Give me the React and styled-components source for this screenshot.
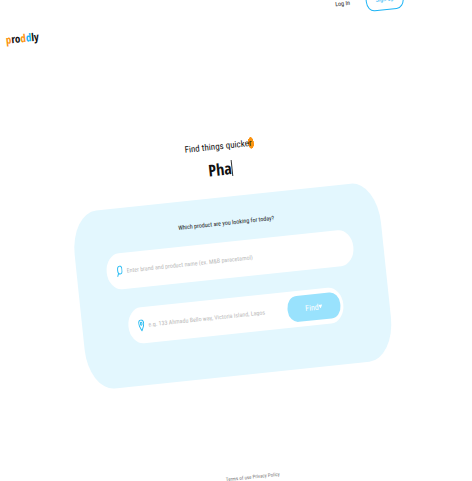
import React from 'react';
import styled, { createGlobalStyle } from 'styled-components';

const GlobalStyle = createGlobalStyle`
  *, *::before, *::after { box-sizing: border-box; }
  body {
    margin: 0;
    background: #fff;
    color: #111;
    font-family: "Roboto Condensed", Roboto, sans-serif;
  }
  a { color: inherit; text-decoration: none; }
  button, input { font: inherit; }
`;

const Shell = styled.div`
  height: 100vh;
  overflow: hidden;
`;

const Page = styled.div`
  display: flex;
  flex-direction: column;
  align-items: center;
  padding: 5px 44px 0 28px;
  transform: rotate(-6deg);
  transform-origin: 50% 240px;
`;

const Header = styled.header`
  display: flex;
  align-self: stretch;
  justify-content: space-between;
  align-items: flex-start;
  height: 132px;
`;

const Logo = styled.a`
  padding-top: 4px;
  font: 700 11px/16px "Open Sans Condensed", "Open Sans", sans-serif;
`;

const LogoLetter = styled.span`
  color: ${(p) => p.$color};
`;

const Nav = styled.nav`
  display: flex;
  align-items: center;
  gap: 16px;
  font-size: 6px;
  line-height: 8px;
`;

const SignUp = styled.a`
  display: flex;
  align-items: center;
  justify-content: center;
  width: 38px;
  height: 22px;
  border: 1px solid #1db4f5;
  border-radius: 8px / 10px;
  color: #1db4f5;
`;

const Hero = styled.section`
  display: flex;
  flex-direction: column;
  align-items: center;
`;

const Tagline = styled.p`
  margin: 0;
  font-size: 9px;
  line-height: 16px;
`;

const Accent = styled.span`
  display: inline-block;
  height: 12px;
  margin-right: -2px;
  padding-right: 2px;
  line-height: 12px;
  background: radial-gradient(ellipse 3px 6px at calc(100% - 3px) 50%, #fb9310 92%, transparent);
`;

const Typed = styled.h1`
  display: flex;
  align-items: center;
  margin: 5px 0 18px;
  font: 700 16px/20px "Open Sans Condensed", "Open Sans", sans-serif;
`;

const Caret = styled.span`
  width: 1px;
  height: 16px;
  background: #333;
`;

const Panel = styled.form`
  display: flex;
  flex-direction: column;
  align-items: center;
  width: 100%;
  max-width: 308px;
  height: 179px;
  padding-top: 21px;
  border-radius: 26px / 42px;
  background: #e3f7fe;
`;

const PanelTitle = styled.h2`
  margin: 0 0 14px;
  font-size: 6px;
  line-height: 10px;
  font-weight: 400;
`;

const Field = styled.label`
  display: flex;
  align-items: center;
  gap: 4px;
  width: ${(p) => p.$width};
  height: 36px;
  margin-bottom: 20px;
  padding: 0 3px 0 10px;
  border-radius: 14px / 18px;
  background: #fff;
`;

const TextInput = styled.input`
  flex: 1;
  min-width: 0;
  padding: 0;
  border: 0;
  outline: 0;
  background: transparent;
  font-size: 6px;
  line-height: 10px;
  &::placeholder { color: #b8b8b8; opacity: 1; }
`;

const FindButton = styled.button`
  display: flex;
  align-items: center;
  justify-content: center;
  width: 53px;
  height: 26px;
  padding: 0;
  border: 0;
  border-radius: 10px / 12px;
  background: #99e2fd;
  color: #fff;
  font-size: 8px;
`;

const Icon = styled.svg`
  flex: none;
  width: 6px;
  height: 12px;
  fill: none;
  stroke: #2bbcf2;
`;

const Arrow = styled.svg`
  width: 4px;
  height: 4px;
  fill: #fff;
`;

const Footer = styled.footer`
  display: flex;
  gap: 1px;
  margin-top: 98px;
  font-size: 5px;
  line-height: 8px;
  color: #777;
`;

export default function App() {
  return (
    <Shell>
      <GlobalStyle />
      <Page>
        <Header>
          <Logo href="#">
            <LogoLetter $color="#fb9310">p</LogoLetter>ro
            <LogoLetter $color="#fb9310">d</LogoLetter>
            <LogoLetter $color="#17b5f5">d</LogoLetter>ly
          </Logo>
          <Nav>
            <a href="#login">Log In</a>
            <SignUp href="#signup">Sign Up</SignUp>
          </Nav>
        </Header>
        <Hero>
          <Tagline>Find things quick<Accent>er</Accent></Tagline>
          <Typed>Pha<Caret /></Typed>
        </Hero>
        <Panel onSubmit={(e) => e.preventDefault()}>
          <PanelTitle>Which product are you looking for today?</PanelTitle>
          <Field $width="248px">
            <Icon viewBox="0 0 6 12">
              <ellipse cx="3.3" cy="4.8" rx="2.2" ry="4" />
              <path d="M1.8 8 L0.4 11.4" />
            </Icon>
            <TextInput aria-label="Product" placeholder="Enter brand and product name (ex. M&B paracetamol)" />
          </Field>
          <Field $width="216px">
            <Icon viewBox="0 0 6 12">
              <path d="M3 11.4 C1.8 8.8 .5 6.8 .5 4.3 C.5 2 1.5 .6 3 .6 S5.5 2 5.5 4.3 C5.5 6.8 4.2 8.8 3 11.4Z" />
              <ellipse cx="3" cy="4.3" rx=".8" ry="1.5" />
            </Icon>
            <TextInput aria-label="Location" placeholder="e.g. 133 Ahmadu Bello way, Victoria Island, Lagos" />
            <FindButton type="submit">
              Find
              <Arrow viewBox="0 0 4 4"><path d="M0 0H4L2 4Z" /></Arrow>
            </FindButton>
          </Field>
        </Panel>
        <Footer>
          <a href="#terms">Terms of use</a>
          <a href="#privacy">Privacy Policy</a>
        </Footer>
      </Page>
    </Shell>
  );
}
